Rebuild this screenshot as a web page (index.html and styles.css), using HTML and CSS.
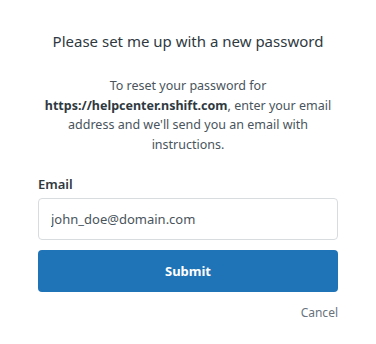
FILE: index.html
```html
<!DOCTYPE html>
<html>
<head>
<meta charset="utf-8">
<link rel="stylesheet" href="styles.css">
</head>
<body>
<div class="page">
  <h1 class="title">Please set me up with a new password</h1>
  <p class="intro">To reset your password for <strong>https://helpcenter.nshift.com</strong>, enter your email address and we'll send you an email with instructions.</p>
  <form class="form">
    <label class="label" for="email">Email</label>
    <input class="input" id="email" type="text" value="john_doe@domain.com">
    <button class="submit" type="button">Submit</button>
    <div class="actions"><a class="cancel" href="#">Cancel</a></div>
  </form>
</div>
</body>
</html>
```
FILE: styles.css
```css
* { box-sizing: border-box; }
html, body { margin: 0; padding: 0; background: #fff; }
body { font-family: "Noto Sans", "Open Sans", sans-serif; color: #2f3941; }
.page { width: 376px; padding: 30px 38px 0; display: flex; flex-direction: column; }
.title { margin: 0; font-size: 15px; font-weight: 400; text-align: center; line-height: 22px; color: #2f3941; }
.intro { margin: 24px 0 0; font-size: 12.5px; line-height: 19.6px; text-align: center; color: #49545c; }
.intro strong { font-weight: 700; color: #2f3941; }
.form { display: flex; flex-direction: column; margin-top: 21px; }
.label { font-size: 13px; font-weight: 600; line-height: 18px; color: #2f3941; }
.input { margin-top: 5px; height: 42px; border: 1px solid #d8dcde; border-radius: 4px; padding: 0 12px; font: inherit; font-size: 13px; color: #49545c; outline: none; }
.submit { margin-top: 10px; height: 42px; border: 0; border-radius: 4px; background: #1f73b7; color: #fff; font: inherit; font-size: 13px; font-weight: 700; }
.actions { display: flex; justify-content: flex-end; margin-top: 12px; }
.cancel { font-size: 12px; color: #68737d; text-decoration: none; line-height: 18px; }
```
